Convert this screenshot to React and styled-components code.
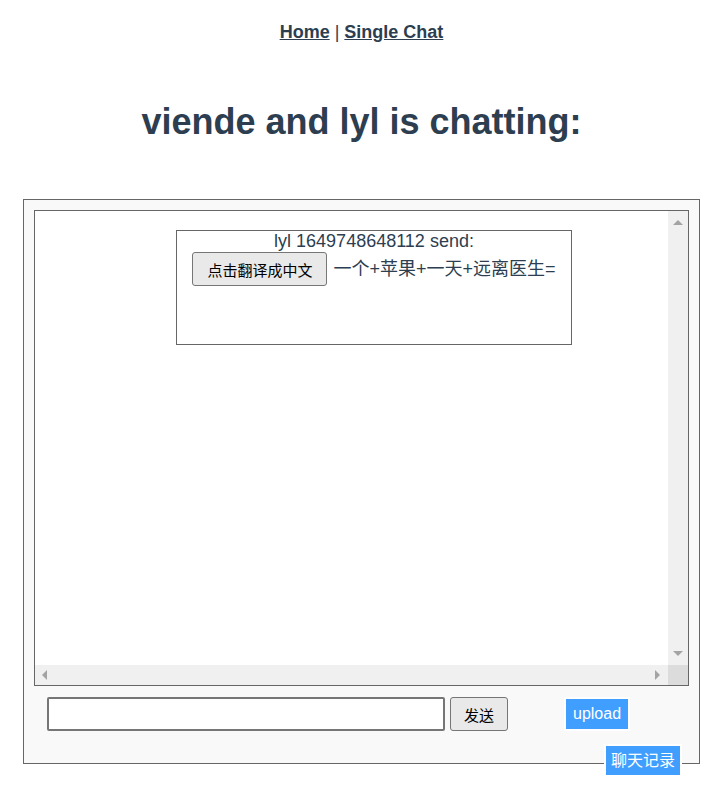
import React from "react";
import styled, { createGlobalStyle, css } from "styled-components";

const GlobalStyle = createGlobalStyle`
  body {
    margin: 0;
    font-family: "Liberation Sans", Arial, "Noto Sans CJK SC", sans-serif;
    color: #2c3e50;
    background: #fff;
  }
`;

const Page = styled.div`
  width: 723px;
  min-height: 804px;
`;

const Nav = styled.div`
  padding-top: 22px;
  text-align: center;
  font-size: 18px;
  line-height: 21px;

  a {
    color: #2c3e50;
    font-weight: bold;
    text-decoration: underline;
  }
`;

const Title = styled.h1`
  margin: 58px 0 0;
  text-align: center;
  font-size: 36px;
  line-height: 41px;
  font-weight: bold;
`;

const Panel = styled.div`
  box-sizing: border-box;
  width: 677px;
  height: 565px;
  margin: 57px auto 0;
  padding: 10px;
  border: 1px solid #666;
  background: #f9f9f9;
`;

// chat window with drawn (always visible) scroll bars
const Messages = styled.div`
  box-sizing: border-box;
  height: 476px;
  border: 1px solid #666;
  background: #fff;
  display: grid;
  grid-template-columns: 1fr 20px;
  grid-template-rows: 1fr 20px;
`;

const Content = styled.div`
  overflow: hidden;
`;

const Track = styled.div`
  display: flex;
  flex-direction: ${(p) => (p.$vertical ? "column" : "row")};
  justify-content: space-between;
  align-items: center;
  background: #f0f0f0;
  padding: ${(p) => (p.$vertical ? "9px 0 9px" : "0 8px 0 7px")};
`;

const Corner = styled.div`
  background: #dcdcdc;
`;

const arrowColor = "#a3a3a3";

const Arrow = styled.span`
  width: 0;
  height: 0;
  ${(p) =>
    p.$dir === "up" &&
    css`
      border-left: 5px solid transparent;
      border-right: 5px solid transparent;
      border-bottom: 5px solid ${arrowColor};
    `}
  ${(p) =>
    p.$dir === "down" &&
    css`
      border-left: 5px solid transparent;
      border-right: 5px solid transparent;
      border-top: 5px solid ${arrowColor};
    `}
  ${(p) =>
    p.$dir === "left" &&
    css`
      border-top: 5px solid transparent;
      border-bottom: 5px solid transparent;
      border-right: 5px solid ${arrowColor};
    `}
  ${(p) =>
    p.$dir === "right" &&
    css`
      border-top: 5px solid transparent;
      border-bottom: 5px solid transparent;
      border-left: 5px solid ${arrowColor};
    `}
`;

const Message = styled.div`
  box-sizing: border-box;
  width: 396px;
  height: 115px;
  margin: 19px 0 0 141px;
  border: 1px solid #666;
  text-align: center;
  font-size: 18px;
  line-height: 21px;
`;

const Line = styled.div`
  display: flex;
  justify-content: center;
  align-items: center;
  gap: 6px;
`;

const GreyButton = styled.button`
  box-sizing: border-box;
  height: 34px;
  padding: 0 ${(p) => p.$pad || 14}px;
  border: 1px solid #767676;
  border-radius: 3px;
  background: #e9e9e9;
  color: #000;
  font-family: "Noto Sans CJK SC", sans-serif;
  font-size: ${(p) => p.$size || 15}px;
  line-height: 1;
  white-space: nowrap;
`;

const Footer = styled.div`
  display: flex;
  align-items: center;
  margin-top: 11px;
  padding-left: 13px;
`;

const Input = styled.input`
  box-sizing: border-box;
  width: 398px;
  height: 34px;
  border: 2px solid #767676;
  border-radius: 2px;
  background: #fff;
`;

const BlueButton = styled.button`
  box-sizing: border-box;
  height: ${(p) => p.$h}px;
  padding: 0 ${(p) => p.$pad}px;
  border: 2px solid #fff;
  background: #409eff;
  color: #fff;
  font-family: "Liberation Sans", Arial, "Noto Sans CJK SC", sans-serif;
  font-size: 16px;
  line-height: 1;
  white-space: nowrap;
`;

const HistoryRow = styled.div`
  display: flex;
  justify-content: flex-end;
  margin-top: 13px;
  padding-right: 7px;
`;

export default function App() {
  return (
    <Page>
      <GlobalStyle />
      <Nav>
        <a href="#">Home</a> | <a href="#">Single Chat</a>
      </Nav>
      <Title>viende and lyl is chatting:</Title>
      <Panel>
        <Messages>
          <Content>
            <Message>
              <div>lyl 1649748648112 send:</div>
              <Line>
                <GreyButton>点击翻译成中文</GreyButton>
                <span>一个+苹果+一天+远离医生=</span>
              </Line>
            </Message>
          </Content>
          <Track $vertical>
            <Arrow $dir="up" />
            <Arrow $dir="down" />
          </Track>
          <Track>
            <Arrow $dir="left" />
            <Arrow $dir="right" />
          </Track>
          <Corner />
        </Messages>
        <Footer>
          <Input type="text" />
          <GreyButton $pad={13} style={{ marginLeft: 5 }}>
            发送
          </GreyButton>
          <BlueButton $h={34} $pad={7} style={{ marginLeft: 56 }}>
            upload
          </BlueButton>
        </Footer>
        <HistoryRow>
          <BlueButton $h={33} $pad={5}>
            聊天记录
          </BlueButton>
        </HistoryRow>
      </Panel>
    </Page>
  );
}
